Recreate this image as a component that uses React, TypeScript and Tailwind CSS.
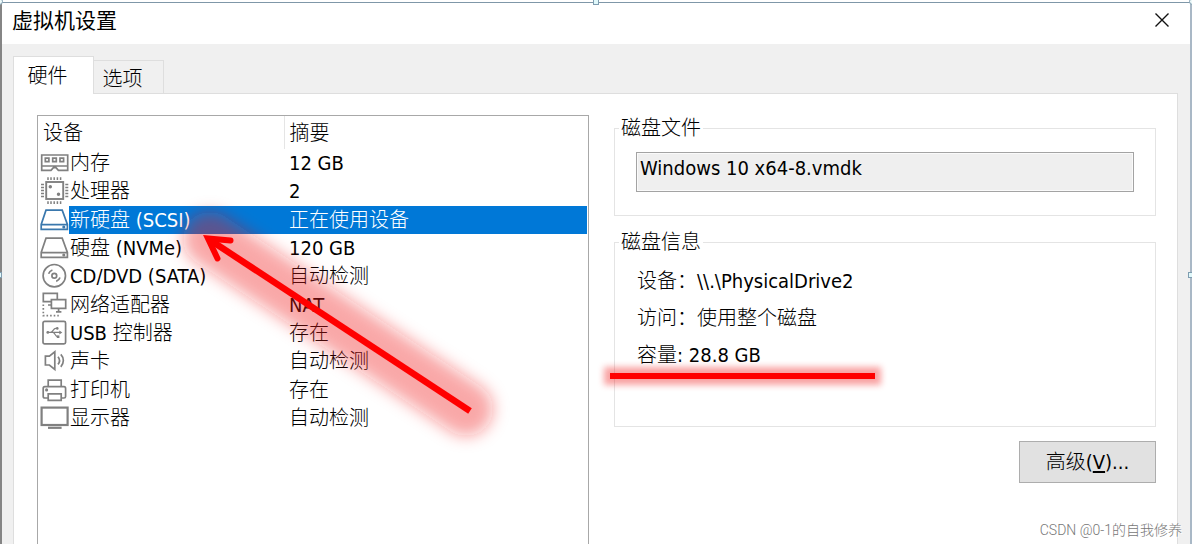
import React from 'react';
import { clsx } from 'clsx';

type IconName =
  | 'memory'
  | 'cpu'
  | 'disk'
  | 'cd'
  | 'network'
  | 'usb'
  | 'sound'
  | 'printer'
  | 'display';

interface Device {
  icon: IconName;
  name: string;
  summary: string;
  selected?: boolean;
}

const devices: Device[] = [
  { icon: 'memory', name: '内存', summary: '12 GB' },
  { icon: 'cpu', name: '处理器', summary: '2' },
  { icon: 'disk', name: '新硬盘 (SCSI)', summary: '正在使用设备', selected: true },
  { icon: 'disk', name: '硬盘 (NVMe)', summary: '120 GB' },
  { icon: 'cd', name: 'CD/DVD (SATA)', summary: '自动检测' },
  { icon: 'network', name: '网络适配器', summary: 'NAT' },
  { icon: 'usb', name: 'USB 控制器', summary: '存在' },
  { icon: 'sound', name: '声卡', summary: '自动检测' },
  { icon: 'printer', name: '打印机', summary: '存在' },
  { icon: 'display', name: '显示器', summary: '自动检测' },
];

const diskInfo = [
  { label: '设备：', value: '\\\\.\\PhysicalDrive2' },
  { label: '访问：', value: '使用整个磁盘' },
  { label: '容量: ', value: '28.8 GB' },
];

const shapes: Record<IconName, React.ReactNode> = {
  memory: (
    <>
      <path d="M2.7 6h26v15.3h-9.3l-2.4-2.6h-2.6L12 21.3H2.7zM2.7 17h26" />
      <path d="M6.3 9.2h3.6v3.4H6.3zM13.7 9.2h3.6v3.4h-3.6zM21 9.2h3.6v3.4H21z" />
    </>
  ),
  cpu: (
    <>
      <rect x="7.2" y="5" width="17" height="17" strokeWidth="1.9" />
      <path d="M9 .3v2.6M12 .3v2.6M15.2 .3v2.6M18.4 .3v2.6M21.6 .3v2.6M9 24.3v2.6M12 24.3v2.6M15.2 24.3v2.6M18.4 24.3v2.6M21.6 24.3v2.6" strokeWidth="1.5" />
      <path d="M2 7.5h3M2 10.5h3M2 13.5h3M2 16.5h3M2 19.5h3M26.3 7.5h3M26.3 10.5h3M26.3 13.5h3M26.3 16.5h3M26.3 19.5h3" strokeWidth="1.5" />
      <circle cx="11.3" cy="9.8" r=".9" fill="currentColor" />
      <circle cx="19.5" cy="17.3" r=".9" fill="currentColor" />
    </>
  ),
  disk: (
    <>
      <path d="M7 4.2h16.2l5.2 14.2v5H2.2v-5zM2 18.6h26.4" />
      <circle cx="24.8" cy="21" r=".7" fill="currentColor" />
    </>
  ),
  cd: (
    <>
      <circle cx="15.3" cy="13.7" r="11.2" />
      <circle cx="15.3" cy="13.7" r="2.4" />
      <path d="M9.6 11.8c.6-1.8 2-3.2 3.8-3.8M21 15.6c-.6 1.8-2 3.2-3.8 3.8" />
    </>
  ),
  network: (
    <>
      <path d="M12 10.7H4.3V2.4h14v6M9 14h3.5" />
      <path d="M12.4 8.7h14.3v8.6H12.4zM19.6 17.3v3.4M17 20.8h5.4" />
      <path d="M4.3 13.5v11.2h15.5" strokeDasharray="1.6 2" />
    </>
  ),
  usb: (
    <>
      <rect x="4" y="2.4" width="22.6" height="22.4" rx="1.6" />
      <path d="M8 13.4h13.5M11.5 13.4c2.6 0 2.6-4 5.2-4h1.8M13.8 13.4c2.4 0 2.2 4.2 4.6 4.2h.8" strokeWidth="1.2" />
      <path d="M20.3 11.4l3 2-3 2z" fill="currentColor" stroke="none" />
      <circle cx="8.8" cy="13.4" r="1.4" fill="currentColor" stroke="none" />
      <circle cx="18.3" cy="9.4" r="1.3" fill="currentColor" stroke="none" />
      <path d="M17.8 16.4h2.6V19h-2.6z" fill="currentColor" stroke="none" />
    </>
  ),
  sound: (
    <>
      <path d="M6.4 9.2h4l5.4-4.4v17.6L10.4 18h-4z" />
      <path d="M19 9.8c1.8 2.2 1.8 5.4 0 7.6M21.8 7.4c3.4 3.6 3.4 8.8 0 12.4" />
    </>
  ),
  printer: (
    <>
      <path d="M9.2 10.6V4.2h13v6.4" />
      <path d="M9.2 22H5.8c-1 0-1.6-.6-1.6-1.6v-8c0-1 .6-1.7 1.6-1.7H25c1 0 1.6.7 1.6 1.7v8c0 1-.6 1.6-1.6 1.6h-2.8" />
      <path d="M9.2 17.8h13v6.6h-13z" />
      <circle cx="7.6" cy="13.9" r=".7" fill="currentColor" />
    </>
  ),
  display: (
    <>
      <rect x="2.6" y="3.6" width="26" height="17.4" strokeWidth="2.2" />
      <path d="M9 23.8h13.6" strokeWidth="2.2" />
    </>
  ),
};

const DeviceIcon: React.FC<{ name: IconName; active?: boolean }> = ({ name, active }) => (
  <svg
    viewBox="0 0 30 28"
    fill="none"
    stroke="currentColor"
    strokeWidth="1.7"
    className={clsx('block h-7 w-[30px]', active ? 'text-[#3a78ad]' : 'text-[#808080]')}
    aria-hidden="true"
  >
    {shapes[name]}
  </svg>
);

const TitleBar: React.FC = () => (
  <header className="flex h-[41px] items-center justify-between bg-white pr-[21px] pl-[10px]">
    <h1 className="pb-[10px] font-['Noto_Sans_CJK_SC',sans-serif] text-[21px] leading-7 font-normal text-black">
      虚拟机设置
    </h1>
    <button type="button" aria-label="关闭" className="pb-2">
      <svg viewBox="0 0 14 14" className="size-[14px]" fill="none" stroke="#111" strokeWidth="1.4">
        <path d="M.5.5l13 13M13.5.5l-13 13" />
      </svg>
    </button>
  </header>
);

const Tabs: React.FC = () => (
  <div role="tablist" className="flex items-end">
    <button
      type="button"
      role="tab"
      aria-selected="true"
      className="relative z-10 -mb-px h-[38px] w-[81px] border border-b-0 border-[#dedede] bg-white pr-3 text-center"
    >
      硬件
    </button>
    <button
      type="button"
      role="tab"
      aria-selected="false"
      className="h-[33px] w-[70px] border-t border-r border-[#dedede] bg-[#f0f0f0] pt-1 pr-3 text-center"
    >
      选项
    </button>
  </div>
);

const DeviceList: React.FC = () => (
  <div className="relative w-[552px] shrink-0 border border-b-0 border-[#a8a8a8] bg-white pr-px">
    <table className="h-[316px] w-full table-fixed border-collapse text-left">
      <colgroup>
        <col className="w-[31px]" />
        <col className="w-[215px]" />
        <col />
      </colgroup>
      <thead>
        <tr className="h-[33px]">
          <th colSpan={2} className="border-r border-[#e5e5e5] p-0 pl-[5px] font-light">
            设备
          </th>
          <th className="p-0 pl-[5px] font-light">摘要</th>
        </tr>
      </thead>
      <tbody>
        {devices.map((device) => (
          <tr key={device.name}>
            <td className="p-0 pl-px">
              <DeviceIcon name={device.icon} active={device.selected} />
            </td>
            <td className={clsx('p-0 pl-px', device.selected && 'bg-[#0078d7] text-white')}>
              {device.name}
            </td>
            <td className={clsx('p-0 pl-[5px]', device.selected && 'bg-[#0078d7] text-white')}>
              {device.summary}
            </td>
          </tr>
        ))}
      </tbody>
    </table>
    <ArrowMark />
  </div>
);

// Red arrow with a soft halo, drawn over the device list
const ArrowMark: React.FC = () => (
  <svg
    viewBox="0 0 360 280"
    className="pointer-events-none absolute top-[75px] left-[122px] h-[280px] w-[360px] overflow-visible"
    fill="none"
    aria-hidden="true"
  >
    <defs>
      <filter id="halo" x="-30%" y="-40%" width="160%" height="180%">
        <feGaussianBlur stdDeviation="8" />
      </filter>
    </defs>
    <path
      d="M306 218L50 48"
      stroke="#f01818"
      strokeOpacity=".38"
      strokeWidth="54"
      strokeLinecap="round"
      filter="url(#halo)"
    />
    <path d="M310 220L50 49" stroke="#f00" strokeWidth="6.5" />
    <path d="M70.5 49.5L48 47.5L57.5 67.5" stroke="#f00" strokeWidth="6" strokeLinecap="round" />
  </svg>
);

const DiskPanel: React.FC = () => (
  <div className="flex min-w-0 flex-1 flex-col gap-[14px]">
    <fieldset className="h-[100px] border border-[#e4e4e4] px-[21px]">
      <legend className="-ml-[17px] px-0.5">磁盘文件</legend>
      <input
        type="text"
        readOnly
        aria-label="磁盘文件"
        defaultValue="Windows 10 x64-8.vmdk"
        className="mt-3 block h-10 w-full border border-[#a3a3a3] bg-[#efefef] px-[3px] pb-2 shadow-[inset_0_0_0_1px_#fafafa] outline-none"
      />
    </fieldset>
    <fieldset className="relative h-[197px] border border-[#e4e4e4] px-[22px]">
      <legend className="-ml-[18px] px-0.5">磁盘信息</legend>
      <dl className="flex flex-col pt-2">
        {diskInfo.map(({ label, value }) => (
          <div key={label} className="flex h-[37px] items-center whitespace-pre">
            <dt>{label}</dt>
            <dd>{value}</dd>
          </div>
        ))}
      </dl>
      <div className="absolute top-[119px] -left-[5px] h-[6px] w-[265px] bg-[#f00] shadow-[0_0_6px_6px_rgba(240,24,24,0.4)]" />
    </fieldset>
    <button
      type="button"
      className="h-[42px] w-[137px] self-end border border-[#adadad] bg-[#e1e1e1] text-center"
    >
      高级(<span className="underline underline-offset-2">V</span>)...
    </button>
  </div>
);

// Selection grips along the edge of the window
const Grips: React.FC = () => (
  <div className="pointer-events-none absolute inset-0 overflow-hidden" aria-hidden="true">
    <span className="absolute -top-[2px] -left-[4px] size-[7px] rounded-full border border-[#7f9db0] bg-[#eefafa]" />
    <span className="absolute -top-px left-1/2 size-[6px] -translate-x-1/2 border border-[#7f9db0] bg-[#e0f8fa]" />
    <span className="absolute -top-[2px] -right-[4px] size-[7px] rounded-full border border-[#7f9db0] bg-[#eefafa]" />
    <span className="absolute top-[272px] -left-[4px] size-[6px] border border-[#7f9db0] bg-[#e0f8fa]" />
    <span className="absolute top-[272px] -right-[2px] size-[6px] border border-[#7f9db0] bg-[#e0f8fa]" />
  </div>
);

export default function App() {
  return (
    <div className="relative flex min-h-screen flex-col overflow-hidden bg-white pt-[2px] font-['DejaVu_Sans_Condensed','Noto_Sans_CJK_SC',sans-serif] text-xl leading-6 font-light text-black">
      <div className="flex flex-1 flex-col border-t border-r-2 border-l-2 border-t-[#7f97a8] border-r-[#a9b8c6] border-l-[#858585] bg-[#f0f0f0]">
        <TitleBar />
        <main className="flex flex-1 flex-col pt-3 pr-3 pl-[11px]">
          <Tabs />
          <div className="flex flex-1 border border-b-0 border-[#dedede] bg-white pt-[21px] pr-[21px] pl-[23px]">
            <DeviceList />
            <div className="flex min-w-0 flex-1 pt-px pl-[25px]">
              <DiskPanel />
            </div>
          </div>
        </main>
      </div>
      <Grips />
      <p className="absolute right-[10px] bottom-1 font-[Roboto,'Noto_Sans_CJK_SC',sans-serif] text-sm leading-5 text-[#777] [text-shadow:1px_1px_0_#fff]">
        CSDN @0-1的自我修养
      </p>
    </div>
  );
}
